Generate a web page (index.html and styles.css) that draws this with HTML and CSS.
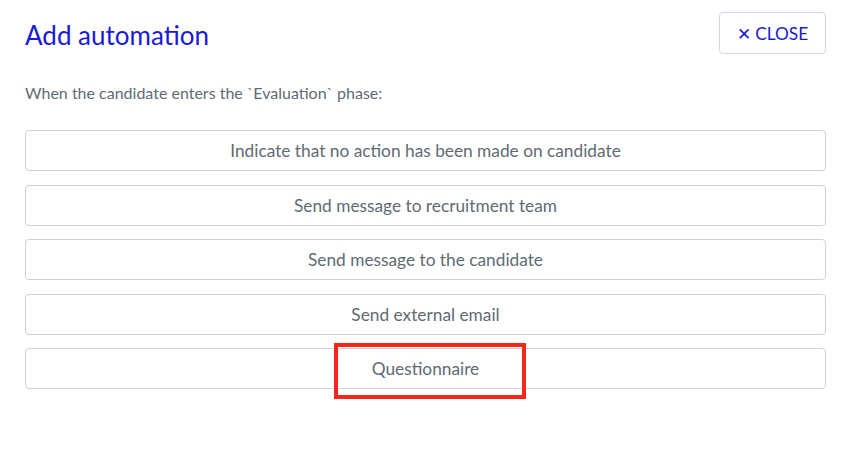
FILE: index.html
```html
<!DOCTYPE html>
<html>
<head>
<meta charset="utf-8">
<link rel="stylesheet" href="styles.css">
</head>
<body>
<div class="modal">
  <div class="header">
    <h1 class="title">Add automation</h1>
    <button class="close">✕ CLOSE</button>
  </div>
  <p class="desc">When the candidate enters the `Evaluation` phase:</p>
  <div class="options">
    <div class="option">Indicate that no action has been made on candidate</div>
    <div class="option">Send message to recruitment team</div>
    <div class="option">Send message to the candidate</div>
    <div class="option">Send external email</div>
    <div class="option">Questionnaire<span class="highlight"></span></div>
  </div>
</div>
</body>
</html>
```
FILE: styles.css
```css
html, body {
  margin: 0;
  padding: 0;
  background: #fff;
}
body {
  font-family: Lato, "Open Sans", sans-serif;
  width: 852px;
  height: 449px;
  overflow: hidden;
}
.modal {
  padding: 12px 26px 0 25px;
}
.header {
  display: flex;
  justify-content: space-between;
  align-items: flex-start;
  height: 42px;
}
.title {
  margin: 8px 0 0 0;
  font-size: 26px;
  font-weight: 400;
  color: #1a1ad6;
  line-height: 30px;
}
.close {
  font-family: Lato, sans-serif;
  height: 42px;
  width: 107px;
  background: #fff;
  border: 1px solid #d2d4f0;
  border-radius: 4px;
  color: #1a1ad6;
  font-size: 17.3px;
  padding: 0;
  margin-right: 0;
}
.desc {
  margin: 29px 0 0 0;
  font-size: 16px;
  line-height: 20px;
  color: #5f6b73;
}
.options {
  margin-top: 27px;
  display: flex;
  flex-direction: column;
  gap: 13.5px;
}
.option {
  position: relative;
  height: 41px;
  box-sizing: border-box;
  border: 1px solid #cfd2d4;
  border-radius: 4px;
  display: flex;
  align-items: center;
  justify-content: center;
  font-size: 17.3px;
  color: #5f6b73;
}
.highlight {
  position: absolute;
  left: 308px;
  top: -6px;
  width: 192px;
  height: 56px;
  box-sizing: border-box;
  border: 4.5px solid #f5271a;
}
```
